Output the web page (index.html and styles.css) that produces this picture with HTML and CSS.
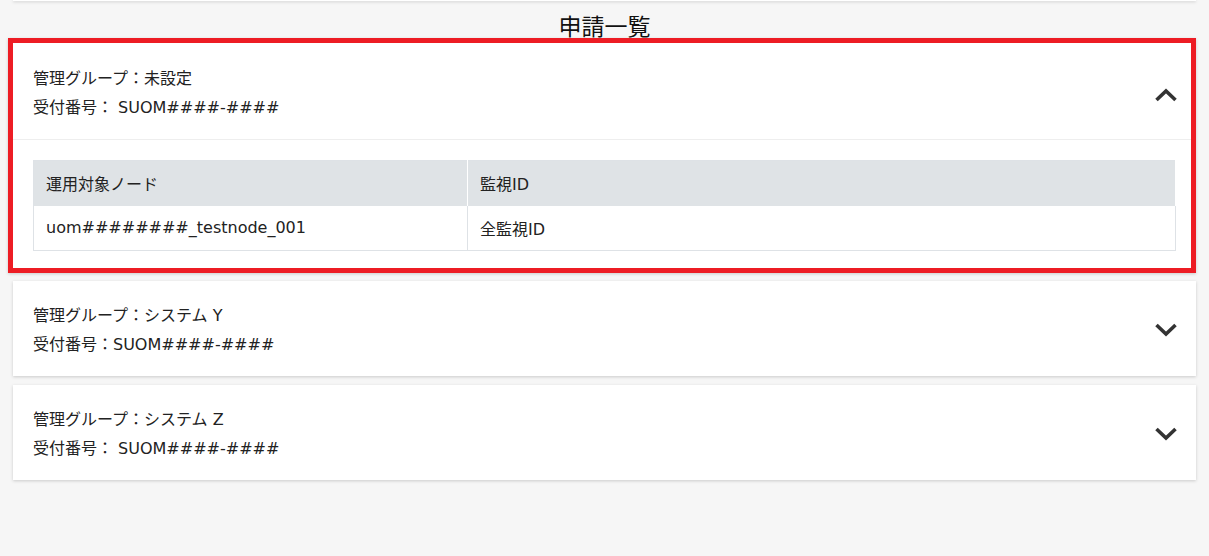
FILE: index.html
```html
<!DOCTYPE html>
<html lang="ja">
<head>
    <meta charset="UTF-8">
    <meta name="viewport" content="width=device-width, initial-scale=1.0">
    <title>申請一覧</title>
    <link rel="stylesheet" href="styles.css">
</head>
<body>
    <div class="top-bar"></div>
    <h1 class="page-title">申請一覧</h1>

    <div class="request-list">
        <!-- opened item -->
        <div class="card is-selected">
            <div class="card-header">
                <div class="card-info">
                    <p>管理グループ：未設定</p>
                    <p>受付番号： SUOM####-####</p>
                </div>
                <svg class="chevron" width="24" height="14" viewBox="0 0 24 14">
                    <polyline points="2.5,12 12,3 21.5,12" />
                </svg>
            </div>
            <div class="card-body">
                <table class="node-table">
                    <tr>
                        <th class="col-node">運用対象ノード</th>
                        <th>監視ID</th>
                    </tr>
                    <tr>
                        <td>uom########_testnode_001</td>
                        <td>全監視ID</td>
                    </tr>
                </table>
            </div>
        </div>

        <div class="card">
            <div class="card-header">
                <div class="card-info">
                    <p>管理グループ：システム Y</p>
                    <p>受付番号：SUOM####-####</p>
                </div>
                <svg class="chevron" width="24" height="14" viewBox="0 0 24 14">
                    <polyline points="2.5,2 12,11 21.5,2" />
                </svg>
            </div>
        </div>

        <div class="card">
            <div class="card-header">
                <div class="card-info">
                    <p>管理グループ：システム Z</p>
                    <p>受付番号： SUOM####-####</p>
                </div>
                <svg class="chevron" width="24" height="14" viewBox="0 0 24 14">
                    <polyline points="2.5,2 12,11 21.5,2" />
                </svg>
            </div>
        </div>
    </div>
</body>
</html>
```

FILE: styles.css
```css
body {
    margin: 0;
    background-color: #f6f6f6;
    font-family: "DejaVu Sans", "Noto Sans CJK JP", sans-serif;
    font-size: 16px;
    color: #222;
}
.top-bar {
    height: 1px;
    margin: 0 13px;
    background-color: #fff;
    box-shadow: 0 1px 3px rgba(0, 0, 0, 0.25);
}
.page-title {
    margin: 11px 0 0;
    font-family: "Noto Sans CJK JP", sans-serif;
    font-size: 23px;
    font-weight: normal;
    line-height: 26px;
    text-align: center;
    color: #111;
}
.request-list {
    display: flex;
    flex-direction: column;
    gap: 9px;
    padding: 0 13px 20px;
}
.card {
    background-color: #fff;
    box-shadow: 0 1px 3px rgba(0, 0, 0, 0.18);
}
/* red frame round the opened item */
.card.is-selected {
    border: 5px solid #ed1c24;
    margin-left: -5px;
    margin-bottom: -1px;
}
.card-header {
    display: flex;
    align-items: center;
    justify-content: space-between;
    padding: 20px 18px 17px 20px;
}
.is-selected .card-header {
    padding: 21px 13px 17px 20px;
    border-bottom: 1px solid #eee;
}
.card-info p {
    margin: 0;
    line-height: 29px;
}
.chevron polyline {
    fill: none;
    stroke: #333;
    stroke-width: 3.6;
}
.is-selected .chevron {
    margin-top: 4px;
}
.card-body {
    padding: 20px 15px 17px 20px;
}
.node-table {
    width: 100%;
    border-collapse: collapse;
    border: 1px solid #dee2e6;
}
.node-table th,
.node-table td {
    height: 45px;
    padding: 0 12px;
    text-align: left;
    font-weight: normal;
    box-sizing: border-box;
}
.node-table th {
    background-color: #dfe3e6;
    border-right: 1px solid #fff;
}
.node-table td {
    border-right: 1px solid #dee2e6;
}
.col-node {
    width: 434px;
}
```
